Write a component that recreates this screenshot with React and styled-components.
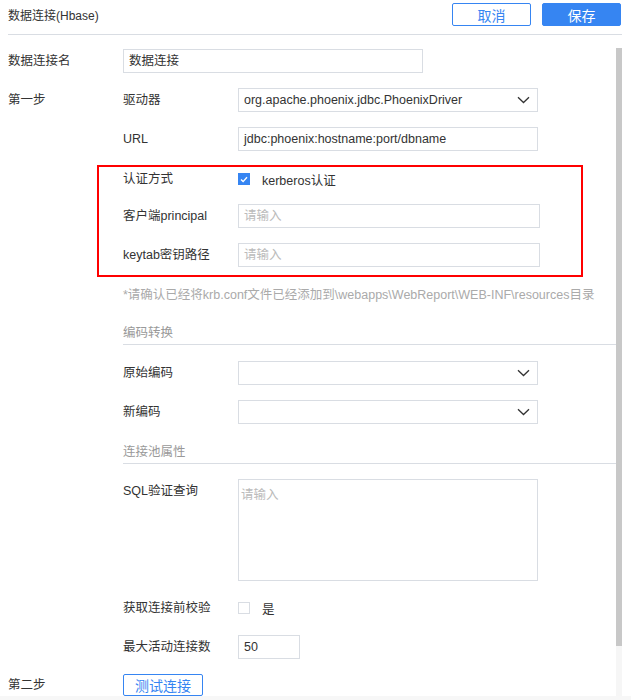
import React from "react"
import styled, { createGlobalStyle } from "styled-components"

const GlobalStyle = createGlobalStyle`
  html, body {
    margin: 0;
    padding: 0;
    background: #fff;
  }
  body {
    font-family: "Liberation Sans", "Noto Sans CJK SC", sans-serif;
    font-size: 12.5px;
    color: #333;
  }
  * {
    box-sizing: border-box;
  }
`

const BLUE = "#3685f2"
const BORDER = "#d9dde3"

const Chevron = () => (
  <svg width="13" height="8" viewBox="0 0 13 8">
    <path d="M1 1.2 L6.5 6.5 L12 1.2" fill="none" stroke="#333" strokeWidth="1.3" />
  </svg>
)

const Tick = () => (
  <svg width="8" height="7" viewBox="0 0 8 7">
    <path d="M1 3.6 L3.1 5.6 L7 1.2" fill="none" stroke="#fff" strokeWidth="1.4" />
  </svg>
)

const Field = ({ label, top, children }) => (
  <Row top={top}>
    <Label>{label}</Label>
    {children}
  </Row>
)

const App = () => {
  return (
    <>
      <GlobalStyle />
      <Page>
        <Header>
          <Title>数据连接(Hbase)</Title>
          <Actions>
            <Button>取消</Button>
            <Button primary>保存</Button>
          </Actions>
        </Header>

        <Body>
          <Content>
            <Row top={0}>
              <StepLabel>数据连接名</StepLabel>
              <TextBox width={300}>数据连接</TextBox>
            </Row>

            <Step>
              <StepLabel>第一步</StepLabel>
              <StepBody>
                <Field label="驱动器" top={0}>
                  <Select>
                    <span>org.apache.phoenix.jdbc.PhoenixDriver</span>
                    <Chevron />
                  </Select>
                </Field>
                <Field label="URL">
                  <TextBox width={300}>jdbc:phoenix:hostname:port/dbname</TextBox>
                </Field>

                <Highlight>
                  <Field label="认证方式" top={0}>
                    <Check checked>
                      <Tick />
                    </Check>
                    <CheckText>kerberos认证</CheckText>
                  </Field>
                  <Field label="客户端principal" top={13}>
                    <TextBox width={302} empty>请输入</TextBox>
                  </Field>
                  <Field label="keytab密钥路径">
                    <TextBox width={302} empty>请输入</TextBox>
                  </Field>
                </Highlight>

                <Note>*请确认已经将krb.conf文件已经添加到\webapps\WebReport\WEB-INF\resources目录</Note>

                <Section top={20}>编码转换</Section>
                <Field label="原始编码" top={16}>
                  <Select>
                    <span />
                    <Chevron />
                  </Select>
                </Field>
                <Field label="新编码">
                  <Select>
                    <span />
                    <Chevron />
                  </Select>
                </Field>

                <Section top={19}>连接池属性</Section>
                <TopRow>
                  <Label>SQL验证查询</Label>
                  <TextArea>请输入</TextArea>
                </TopRow>
                <Field label="获取连接前校验">
                  <Check />
                  <CheckText>是</CheckText>
                </Field>
                <Field label="最大活动连接数">
                  <TextBox width={62}>50</TextBox>
                </Field>
              </StepBody>
            </Step>

            <Step second>
              <StepLabel>第二步</StepLabel>
              <OutlineButton>测试连接</OutlineButton>
            </Step>
          </Content>
          <Track>
            <Thumb />
          </Track>
        </Body>
        <Footer />
      </Page>
    </>
  )
}

export default App

const Page = styled.div`
  width: 631px;
  height: 700px;
  padding: 0 9px 0 8px;
  display: flex;
  flex-direction: column;
  overflow: hidden;
`

const Header = styled.div`
  height: 35px;
  padding: 3px 1px 0 0;
  display: flex;
  justify-content: space-between;
  align-items: flex-start;
  border-bottom: 1px solid ${BORDER};
  flex: none;
`

const Title = styled.div`
  font-size: 12px;
  line-height: 18px;
  height: 18px;
  margin-top: 4px;
  color: #333;
`

const Actions = styled.div`
  display: flex;
  gap: 11px;
`

const Button = styled.div`
  width: 79px;
  height: 23px;
  display: flex;
  align-items: center;
  justify-content: center;
  font-size: 14px;
  border: 1px solid ${BLUE};
  color: ${(p) => (p.primary ? "#fff" : BLUE)};
  background: ${(p) => (p.primary ? BLUE : "#fff")};
  border-radius: 2px;
`

const Body = styled.div`
  flex: 1;
  min-height: 0;
  display: flex;
`

const Content = styled.div`
  flex: 1;
  min-width: 0;
  overflow: hidden;
  padding-top: 14px;
`

const Track = styled.div`
  width: 6px;
  flex: none;
  margin-top: 13px;
  display: flex;
  flex-direction: column;
  background-color: #f6f6f6;
  background-image: radial-gradient(#ececec 0.6px, transparent 0.7px);
  background-size: 2px 2px;
`

const Thumb = styled.div`
  height: 598px;
  background: #c8c8c8;
`

const Footer = styled.div`
  height: 4px;
  flex: none;
  margin: 0 -9px 0 -8px;
  background: #f7f7f7;
`

const Row = styled.div`
  display: flex;
  align-items: center;
  height: 24px;
  flex: none;
  margin-top: ${(p) => (p.top !== undefined ? p.top : 15)}px;
`

const TopRow = styled.div`
  display: flex;
  align-items: flex-start;
  margin-top: 15px;
`

const Step = styled.div`
  display: flex;
  align-items: ${(p) => (p.second ? "center" : "flex-start")};
  margin-top: ${(p) => (p.second ? 14 : 15)}px;
`

const StepLabel = styled.div`
  width: 115px;
  flex: none;
  height: 24px;
  line-height: 24px;
  color: #333;
`

const StepBody = styled.div`
  flex: 1;
  display: flex;
  flex-direction: column;
`

const Label = styled.div`
  width: 115px;
  flex: none;
  height: 24px;
  line-height: 24px;
  color: #333;
  white-space: nowrap;
`

const TextBox = styled.div`
  width: ${(p) => p.width}px;
  height: 24px;
  border: 1px solid ${BORDER};
  padding: 0 5px;
  line-height: 22px;
  color: ${(p) => (p.empty ? "#bbb" : "#333")};
  white-space: nowrap;
  overflow: hidden;
`

const Select = styled.div`
  width: 300px;
  height: 24px;
  border: 1px solid ${BORDER};
  padding: 0 7px 0 5px;
  display: flex;
  align-items: center;
  justify-content: space-between;
  line-height: 22px;
`

const TextArea = styled.div`
  width: 300px;
  height: 102px;
  border: 1px solid ${BORDER};
  padding: 6px 2px;
  line-height: 18px;
  color: #bbb;
`

const Check = styled.div`
  width: 12px;
  height: 12px;
  flex: none;
  display: flex;
  align-items: center;
  justify-content: center;
  background: ${(p) => (p.checked ? BLUE : "#fff")};
  border: 1px solid ${(p) => (p.checked ? BLUE : BORDER)};
`

const CheckText = styled.span`
  margin-left: 12px;
  color: #333;
`

const Highlight = styled.div`
  margin: 14px 0 0 -26px;
  width: 486px;
  border: 2px solid #f00;
  padding: 0 0 8px 24px;
`

const Note = styled.div`
  margin-top: 9px;
  height: 18px;
  line-height: 18px;
  color: #aaa;
  white-space: nowrap;
`

const Section = styled.div`
  margin-top: ${(p) => p.top}px;
  height: 21px;
  line-height: 18px;
  padding-bottom: 2px;
  color: #999;
  border-bottom: 1px solid ${BORDER};
`

const OutlineButton = styled.div`
  width: 80px;
  height: 22px;
  border: 1px solid ${BLUE};
  color: ${BLUE};
  font-size: 14px;
  display: flex;
  align-items: center;
  justify-content: center;
  border-radius: 2px;
`
